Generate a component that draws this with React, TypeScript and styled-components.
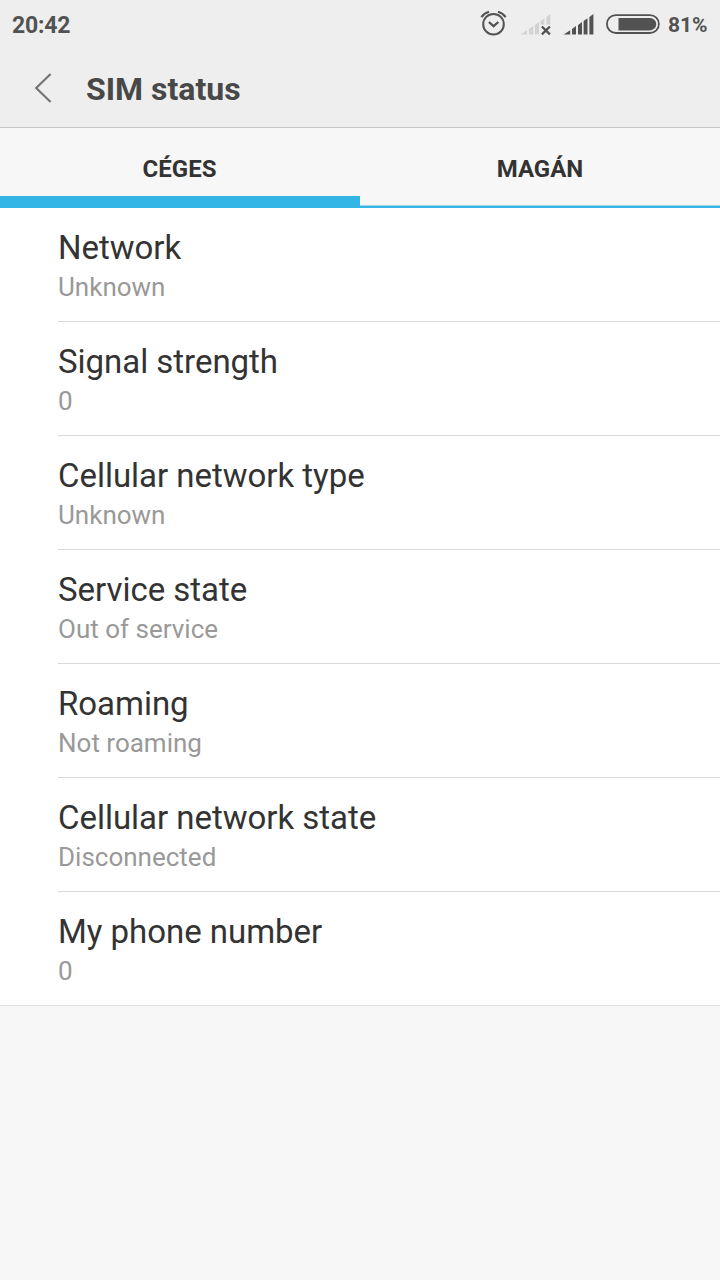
import React from "react";
import styled, { createGlobalStyle } from "styled-components";

const GlobalStyle = createGlobalStyle`
  * { box-sizing: border-box; }
  body { margin: 0; background: #f7f7f7; font-family: Roboto, sans-serif; }
`;

const Screen = styled.div`
  width: 720px;
  min-height: 1280px;
  display: flex;
  flex-direction: column;
  background: #f7f7f7;
  color: #333;
`;

const Header = styled.header`
  height: 128px;
  background: #eee;
  border-bottom: 1px solid #c6c6c6;
`;

const StatusBar = styled.div`
  height: 50px;
  padding: 0 13px 0 12px;
  display: flex;
  align-items: center;
  justify-content: space-between;
  color: #525252;
  font-size: 23px;
  line-height: 50px;
  font-weight: 700;
`;

const Clock = styled.span`
  padding-top: 1px;
  letter-spacing: -0.2px;
`;

const StatusIcons = styled.div`
  display: flex;
  align-items: center;
  gap: 8px;
`;

const Percent = styled.span`
  width: 39px;
  font-size: 21px;
  white-space: nowrap;
`;

const TitleBar = styled.div`
  height: 76px;
  display: flex;
  align-items: center;
  gap: 34px;
  padding-left: 34px;
`;

const BackButton = styled.button`
  display: flex;
  padding: 0;
  border: 0;
  background: none;
`;

const Title = styled.h1`
  margin: 2px 0 0;
  font-size: 32px;
  line-height: 40px;
  font-weight: 700;
  color: #484848;
`;

const Tabs = styled.nav`
  height: 80px;
  display: flex;
`;

const Tab = styled.button`
  flex: 1;
  display: flex;
  flex-direction: column;
  padding: 0;
  border: 0;
  background: none;
  font: 700 24px/82px Roboto, sans-serif;
  color: #333;
`;

const TabLabel = styled.span<{ $active?: boolean }>`
  width: 100%;
  height: 68px;
  padding-right: ${(p) => (p.$active ? 1 : 0)}px;
  text-align: center;
`;

const Indicator = styled.span<{ $active?: boolean }>`
  width: 100%;
  height: ${(p) => (p.$active ? 12 : 3)}px;
  margin-top: ${(p) => (p.$active ? 0 : 9)}px;
  background: #33b5e5;
  border-top: ${(p) => (p.$active ? "none" : "1px solid #a3d5e8")};
`;

const List = styled.main`
  display: flex;
  flex-direction: column;
  background: #fff;
  border-bottom: 1px solid #dfdfdf;
`;

const Row = styled.div`
  height: 114px;
  margin-left: 58px;
  padding-top: 20px;
  border-bottom: 1px solid #d9d9d9;
  &:last-child {
    height: 113px;
    border-bottom: 0;
  }
`;

const RowTitle = styled.div`
  font-size: 33px;
  line-height: 40px;
  letter-spacing: -0.03px;
  color: #333;
`;

const RowValue = styled.div`
  margin-top: 4px;
  font-size: 26px;
  line-height: 30px;
  color: #999;
`;

const rows = [
  ["Network", "Unknown"],
  ["Signal strength", "0"],
  ["Cellular network type", "Unknown"],
  ["Service state", "Out of service"],
  ["Roaming", "Not roaming"],
  ["Cellular network state", "Disconnected"],
  ["My phone number", "0"],
];

const StatusGlyphs = () => (
  <svg width="180" height="50" viewBox="480 0 180 50" fill="none">
    <g stroke="#525252">
      <circle cx="493.5" cy="24.2" r="10.3" strokeWidth="2" />
      <path d="M488.9 22l4.7 4.2 4.7-4.2" strokeWidth="2.3" />
      <path d="M481.4 17.1Q484.2 13 489 11.7M505.6 17.1Q502.8 13 498 11.7" strokeWidth="2.2" />
    </g>
    <path
      fill="#d2d2d2"
      d="M520.7 34.4L527 30.2V34.4zM529 34.4V28.9L533.2 26V34.4zM534.8 34.4V25L539 22V34.4zM540.4 24.5V21.2L544.3 18.5V24.5zM546.4 24.5V17L550.3 14.3V24.5z"
    />
    <path d="M541.9 26.5l8 7.9M549.9 26.5l-8 7.9" stroke="#525252" strokeWidth="2.3" />
    <path
      fill="#525252"
      d="M563.7 34.6L570.2 30.2V34.6zM572 34.6V28.9L576 26V34.6zM578 34.6V25L582 22V34.6zM583.6 34.6V21L587.5 18.3V34.6zM589.4 34.6V17L593.4 14V34.6z"
    />
    <rect x="606.9" y="15.1" width="52" height="17.9" rx="8.95" stroke="#525252" strokeWidth="1.8" />
    <path fill="#525252" d="M618.5 18H650a6.2 6.2 0 0 1 0 12.4H618.5z" />
  </svg>
);

export default function App() {
  return (
    <>
      <GlobalStyle />
      <Screen>
        <Header>
          <StatusBar>
            <Clock>20:42</Clock>
            <StatusIcons>
              <StatusGlyphs />
              <Percent>81%</Percent>
            </StatusIcons>
          </StatusBar>
          <TitleBar>
            <BackButton aria-label="Back">
              <svg width="18" height="30" viewBox="0 0 18 30" fill="none">
                <path d="M16.6 1L2.2 15l14.4 14" stroke="#727272" strokeWidth="2.1" />
              </svg>
            </BackButton>
            <Title>SIM status</Title>
          </TitleBar>
        </Header>
        <Tabs>
          <Tab>
            <TabLabel $active>CÉGES</TabLabel>
            <Indicator $active />
          </Tab>
          <Tab>
            <TabLabel>MAGÁN</TabLabel>
            <Indicator />
          </Tab>
        </Tabs>
        <List>
          {rows.map(([title, value]) => (
            <Row key={title}>
              <RowTitle>{title}</RowTitle>
              <RowValue>{value}</RowValue>
            </Row>
          ))}
        </List>
      </Screen>
    </>
  );
}
